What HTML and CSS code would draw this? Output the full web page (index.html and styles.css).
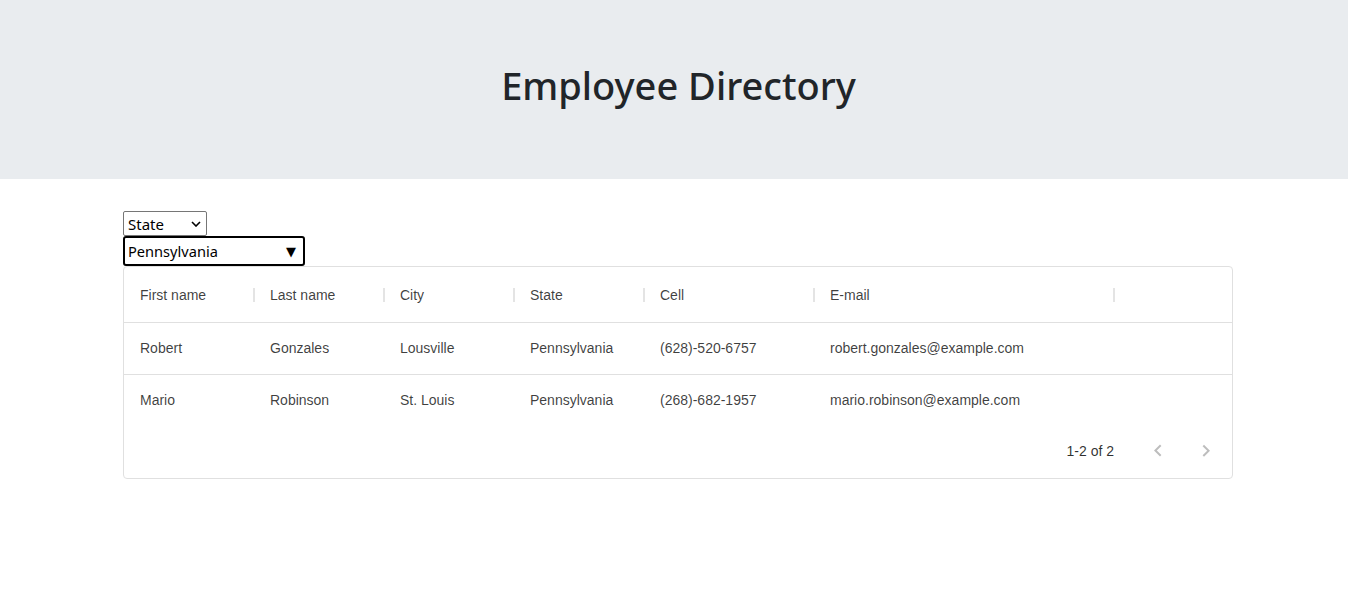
FILE: index.html
```html
<!DOCTYPE html>
<html>
<head>
<meta charset="utf-8">
<title>Employee Directory</title>
<link rel="stylesheet" href="styles.css">
</head>
<body>
<header class="hero">
  <h1 class="hero-title">Employee Directory</h1>
</header>
<main class="container">
  <div class="filters">
    <div class="select-wrap">
      <select class="field-select">
        <option>State</option>
      </select>
      <svg class="select-chevron" viewBox="0 0 10 6" width="10" height="6"><path d="M1 1l4 4 4-4" fill="none" stroke="#000" stroke-width="1.6"/></svg>
    </div>
    <div class="value-select">
      <span class="value-text">Pennsylvania</span>
      <span class="value-arrow">▼</span>
    </div>
  </div>
  <div class="grid">
    <div class="grid-row grid-head">
      <div class="cell w130">First name<span class="sep"></span></div>
      <div class="cell w130">Last name<span class="sep"></span></div>
      <div class="cell w130">City<span class="sep"></span></div>
      <div class="cell w130">State<span class="sep"></span></div>
      <div class="cell w170">Cell<span class="sep"></span></div>
      <div class="cell w300">E-mail<span class="sep"></span></div>
    </div>
    <div class="grid-row grid-body bordered">
      <div class="cell w130">Robert</div>
      <div class="cell w130">Gonzales</div>
      <div class="cell w130">Lousville</div>
      <div class="cell w130">Pennsylvania</div>
      <div class="cell w170">(628)-520-6757</div>
      <div class="cell w300">robert.gonzales@example.com</div>
    </div>
    <div class="grid-row grid-body">
      <div class="cell w130">Mario</div>
      <div class="cell w130">Robinson</div>
      <div class="cell w130">St. Louis</div>
      <div class="cell w130">Pennsylvania</div>
      <div class="cell w170">(268)-682-1957</div>
      <div class="cell w300">mario.robinson@example.com</div>
    </div>
    <div class="grid-footer">
      <span class="page-info">1-2 of 2</span>
      <div class="page-actions">
        <button class="icon-btn" disabled>
          <svg viewBox="0 0 24 24" width="24" height="24"><path d="M15.41 16.09l-4.58-4.59 4.58-4.59L14 5.5l-6 6 6 6z"/></svg>
        </button>
        <button class="icon-btn" disabled>
          <svg viewBox="0 0 24 24" width="24" height="24"><path d="M8.59 16.34l4.58-4.59-4.58-4.59L10 5.75l6 6-6 6z"/></svg>
        </button>
      </div>
    </div>
  </div>
</main>
</body>
</html>
```
FILE: styles.css
```css
* { box-sizing: border-box; }
html, body { margin: 0; padding: 0; background: #fff; }
body { font-family: "Liberation Sans", Arial, sans-serif; }

.hero {
  background: #e9ecef;
  height: 179px;
  padding-top: 61px;
  padding-left: 9px;
}
.hero-title {
  margin: 0;
  text-align: center;
  font-family: "Noto Sans", "Open Sans", sans-serif;
  font-weight: 500;
  font-size: 38px;
  line-height: 48px;
  color: #212529;
}

.container {
  width: 1110px;
  margin-left: calc(50% - 551px);
  padding-top: 32px;
}

.filters { display: flex; flex-direction: column; align-items: flex-start; }

.select-wrap { position: relative; width: 84px; height: 25px; }
.field-select {
  appearance: none;
  -webkit-appearance: none;
  width: 84px;
  height: 25px;
  margin: 0;
  padding: 0 0 0 4px;
  border: 1px solid #767676;
  border-radius: 2px;
  background: #fff;
  font-family: "Noto Sans", sans-serif;
  font-size: 15px;
  color: #000;
}
.select-chevron { position: absolute; right: 6px; top: 10px; pointer-events: none; }

.value-select {
  width: 182px;
  height: 30px;
  border: 2px solid #000;
  border-radius: 3px;
  display: flex;
  align-items: center;
  justify-content: space-between;
  padding: 0 7px 0 3px;
  font-family: "Noto Sans", sans-serif;
  font-size: 14.6px;
  color: #000;
}
.value-arrow { font-size: 13px; font-family: "DejaVu Sans", sans-serif; }

.grid {
  border: 1px solid #e0e0e0;
  border-radius: 4px;
  color: rgba(0,0,0,0.76);
  font-size: 14px;
}
.grid-row { display: flex; }
.grid-head { height: 56px; border-bottom: 1px solid #e0e0e0; }
.grid-body { height: 52px; }
.grid-body .cell { padding-bottom: 2px; }
.bordered { border-bottom: 1px solid #e0e0e0; }
.cell {
  position: relative;
  display: flex;
  align-items: center;
  padding-left: 16px;
  white-space: nowrap;
}
.w130 { width: 130px; }
.w170 { width: 170px; }
.w300 { width: 300px; }
.sep {
  position: absolute;
  right: -1px;
  top: 21px;
  width: 2px;
  height: 14px;
  background: #e4e4e4;
}

.grid-footer {
  height: 51px;
  display: flex;
  align-items: center;
  justify-content: flex-end;
  padding-right: 2px;
  padding-bottom: 3px;
}
.page-info { font-size: 14px; color: rgba(0,0,0,0.82); }
.page-actions { display: flex; margin-left: 20px; }
.icon-btn {
  width: 48px;
  height: 48px;
  padding: 12px;
  border: 0;
  background: transparent;
  display: flex;
  align-items: center;
  justify-content: center;
}
.icon-btn svg { fill: rgba(0,0,0,0.26); }
```
